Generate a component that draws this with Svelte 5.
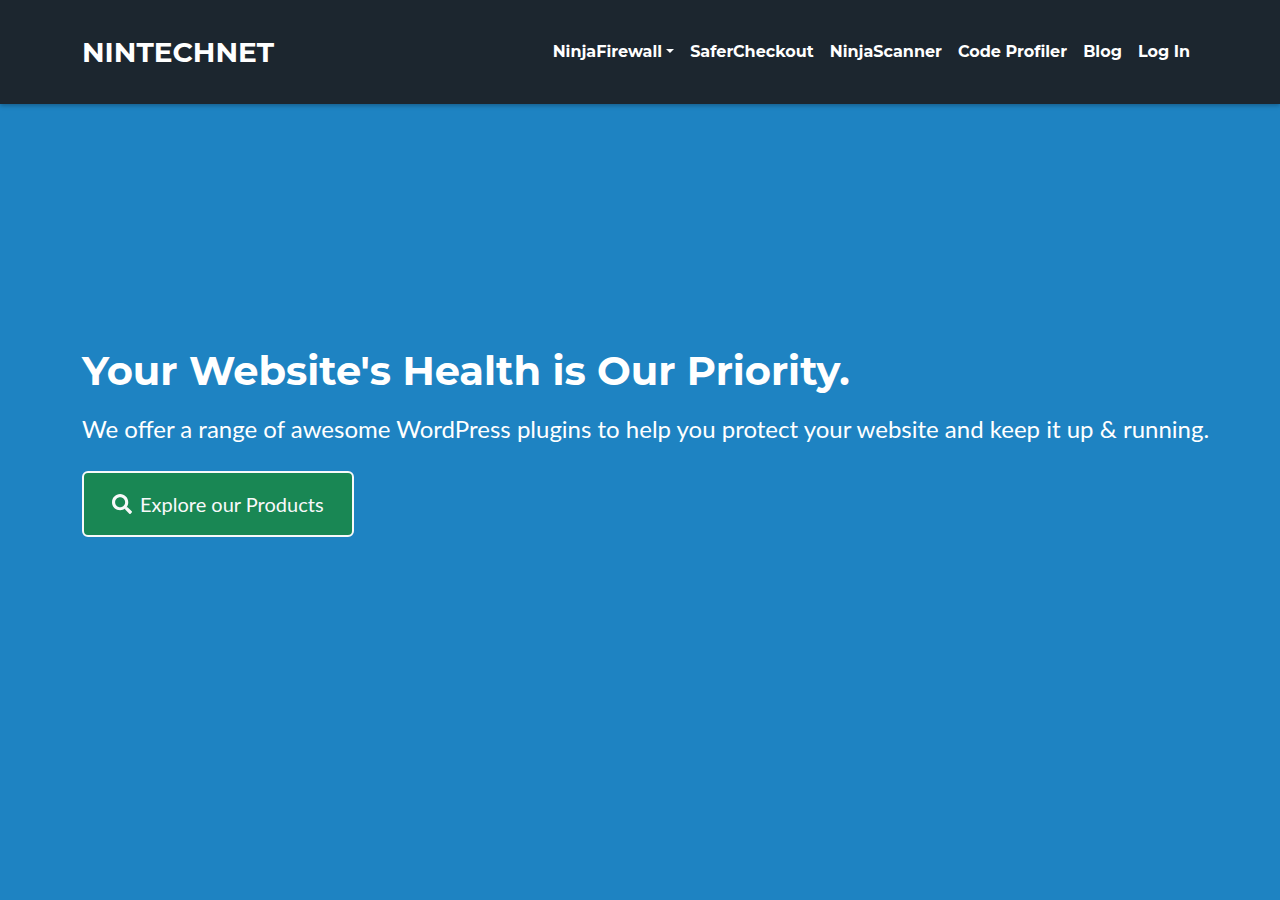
<script lang="ts">
	const links = [
		{ title: "NinjaFirewall", href: "#ninjafirewall", dropdown: true },
		{ title: "SaferCheckout", href: "#safercheckout" },
		{ title: "NinjaScanner", href: "#ninjascanner" },
		{ title: "Code Profiler", href: "#code-profiler" },
		{ title: "Blog", href: "#blog" },
		{ title: "Log In", href: "#login" },
	];
</script>

<div class="page">
	<header>
		<div class="container bar">
			<a class="brand" href="#top">NINTECHNET</a>
			<nav>
				<ul>
					{#each links as { title, href, dropdown }}
						<li>
							<a {href} class:dropdown aria-haspopup={dropdown ? "menu" : undefined}>{title}</a>
						</li>
					{/each}
				</ul>
			</nav>
		</div>
	</header>

	<main>
		<div class="container">
			<h1>Your Website's Health is Our Priority.</h1>
			<p>We offer a range of awesome WordPress plugins to help you protect your website and keep it up &amp; running.</p>
			<a class="button" href="#products">
				<svg viewBox="0 0 512 512" aria-hidden="true">
					<path
						d="M505 442.700L405.300 343c-4.500-4.500-10.600-7-17-7H372c27.600-35.300 44-79.700 44-128C416 93.100 322.900 0 208 0S0 93.100 0 208s93.100 208 208 208c48.300 0 92.700-16.400 128-44v16.300c0 6.400 2.500 12.500 7 17l99.700 99.700c9.400 9.400 24.600 9.400 33.900 0l28.300-28.300c9.400-9.400 9.400-24.600.1-34zM208 336c-70.700 0-128-57.200-128-128 0-70.700 57.200-128 128-128 70.700 0 128 57.200 128 128 0 70.700-57.200 128-128 128z"
					/>
				</svg>
				Explore our Products
			</a>
		</div>
	</main>
</div>

<style>
	:global(body) {
		margin: 0;
		background-color: #1e83c2;
	}

	.page {
		display: flex;
		flex-direction: column;
		min-height: 100vh;
		color: white;
		font-family: Lato, sans-serif;
	}

	.container {
		box-sizing: border-box;
		width: 100%;
		max-width: 1140px;
		margin: 0 auto;
		padding: 0 12px;
	}

	header {
		padding: 32px 0;
		background-color: #1c262f;
		box-shadow: 0 2px 4px rgba(0, 0, 0, 0.25);
		font-family: Montserrat, Inter, sans-serif;
		font-weight: 700;
	}

	.bar {
		display: flex;
		flex-wrap: wrap;
		align-items: center;
		justify-content: space-between;
	}

	a {
		color: white;
		text-decoration: none;
	}

	.brand {
		font-size: 28px;
		line-height: 40px;
	}

	ul {
		display: flex;
		flex-wrap: wrap;
		margin: 0;
		padding: 0;
		list-style: none;
	}

	li a {
		display: block;
		padding: 8px;
		font-size: 16px;
		line-height: 24px;
	}

	.dropdown::after {
		content: "";
		display: inline-block;
		margin-left: 4px;
		vertical-align: 4px;
		border: 4px solid transparent;
		border-top-color: white;
		border-bottom: 0;
	}

	main {
		display: flex;
		flex: 1;
		align-items: center;
		padding-bottom: 120px;
	}

	h1 {
		margin: 0 0 16px;
		font-family: Montserrat, Inter, sans-serif;
		font-size: 40px;
		font-weight: 700;
		line-height: 48px;
	}

	p {
		margin: 0 0 24px;
		font-size: 24px;
		line-height: 36px;
	}

	.button {
		display: inline-flex;
		align-items: center;
		gap: 8px;
		padding: 16px 28px;
		border: 2px solid #f8f9fa;
		border-radius: 6px;
		background-color: #198754;
		color: #f8f9fa;
		font-size: 20px;
		line-height: 30px;
		vertical-align: top;
	}

	svg {
		width: 20px;
		height: 20px;
		fill: currentColor;
	}

	@media (min-width: 1240px) {
		p {
			white-space: nowrap;
		}
	}
</style>
